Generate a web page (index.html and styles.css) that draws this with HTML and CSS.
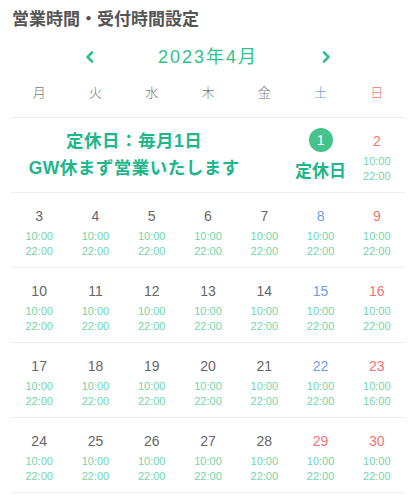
FILE: index.html
```html
<!DOCTYPE html>
<html lang="ja">
<head>
<meta charset="utf-8">
<link rel="stylesheet" href="styles.css">
</head>
<body>
<h1 class="title">営業時間・受付時間設定</h1>
<div class="nav">
  <svg class="arrow" width="16" height="14" viewBox="0 0 16 14"><polyline points="10,2.5 5.5,7 10,11.5" fill="none" stroke="#2fc38a" stroke-width="2.6" stroke-linecap="round" stroke-linejoin="round"/></svg>
  <div class="month">2023年4月</div>
  <svg class="arrow" width="16" height="14" viewBox="0 0 16 14"><polyline points="6,2.5 10.5,7 6,11.5" fill="none" stroke="#2fc38a" stroke-width="2.6" stroke-linecap="round" stroke-linejoin="round"/></svg>
</div>
<div class="calendar">
  <div class="weekdays">
    <span>月</span><span>火</span><span>水</span><span>木</span><span>金</span><span class="sat">土</span><span class="sun">日</span>
  </div>
  <div class="week">
    <div class="notice">定休日：毎月1日<br>GW休まず営業いたします</div>
    <div class="cell closed"><span class="circle">1</span><span class="closed-label">定休日</span></div>
    <div class="cell"><span class="num sun">2</span><span class="time">10:00</span><span class="time">22:00</span></div>
  </div>
  <div class="week">
    <div class="cell"><span class="num">3</span><span class="time">10:00</span><span class="time">22:00</span></div>
    <div class="cell"><span class="num">4</span><span class="time">10:00</span><span class="time">22:00</span></div>
    <div class="cell"><span class="num">5</span><span class="time">10:00</span><span class="time">22:00</span></div>
    <div class="cell"><span class="num">6</span><span class="time">10:00</span><span class="time">22:00</span></div>
    <div class="cell"><span class="num">7</span><span class="time">10:00</span><span class="time">22:00</span></div>
    <div class="cell"><span class="num sat">8</span><span class="time">10:00</span><span class="time">22:00</span></div>
    <div class="cell"><span class="num sun">9</span><span class="time">10:00</span><span class="time">22:00</span></div>
  </div>
  <div class="week">
    <div class="cell"><span class="num">10</span><span class="time">10:00</span><span class="time">22:00</span></div>
    <div class="cell"><span class="num">11</span><span class="time">10:00</span><span class="time">22:00</span></div>
    <div class="cell"><span class="num">12</span><span class="time">10:00</span><span class="time">22:00</span></div>
    <div class="cell"><span class="num">13</span><span class="time">10:00</span><span class="time">22:00</span></div>
    <div class="cell"><span class="num">14</span><span class="time">10:00</span><span class="time">22:00</span></div>
    <div class="cell"><span class="num sat">15</span><span class="time">10:00</span><span class="time">22:00</span></div>
    <div class="cell"><span class="num sun">16</span><span class="time">10:00</span><span class="time">22:00</span></div>
  </div>
  <div class="week">
    <div class="cell"><span class="num">17</span><span class="time">10:00</span><span class="time">22:00</span></div>
    <div class="cell"><span class="num">18</span><span class="time">10:00</span><span class="time">22:00</span></div>
    <div class="cell"><span class="num">19</span><span class="time">10:00</span><span class="time">22:00</span></div>
    <div class="cell"><span class="num">20</span><span class="time">10:00</span><span class="time">22:00</span></div>
    <div class="cell"><span class="num">21</span><span class="time">10:00</span><span class="time">22:00</span></div>
    <div class="cell"><span class="num sat">22</span><span class="time">10:00</span><span class="time">22:00</span></div>
    <div class="cell"><span class="num sun">23</span><span class="time">10:00</span><span class="time">16:00</span></div>
  </div>
  <div class="week">
    <div class="cell"><span class="num">24</span><span class="time">10:00</span><span class="time">22:00</span></div>
    <div class="cell"><span class="num">25</span><span class="time">10:00</span><span class="time">22:00</span></div>
    <div class="cell"><span class="num">26</span><span class="time">10:00</span><span class="time">22:00</span></div>
    <div class="cell"><span class="num">27</span><span class="time">10:00</span><span class="time">22:00</span></div>
    <div class="cell"><span class="num">28</span><span class="time">10:00</span><span class="time">22:00</span></div>
    <div class="cell"><span class="num sun">29</span><span class="time">10:00</span><span class="time">22:00</span></div>
    <div class="cell"><span class="num sun">30</span><span class="time">10:00</span><span class="time">22:00</span></div>
  </div>
</div>
</body>
</html>
```
FILE: styles.css
```css
* { box-sizing: border-box; }
body {
  margin: 0;
  background: #fff;
  font-family: "Liberation Sans", "Noto Sans CJK JP", sans-serif;
  color: #666;
}
.title {
  margin: 0;
  padding: 8px 12px 0;
  font-size: 17px;
  line-height: 24px;
  font-weight: 700;
  color: #555;
}
.nav {
  margin-top: 12px;
  height: 26px;
  display: flex;
  justify-content: center;
  align-items: center;
}
.month {
  width: 220px;
  text-align: center;
  font-size: 18px;
  line-height: 26px;
  letter-spacing: 2px;
  color: #2fc38a;
}
.calendar {
  margin: 0 11px;
}
.weekdays {
  display: grid;
  grid-template-columns: repeat(7, 1fr);
  margin-top: 13px;
  padding-bottom: 14px;
  border-bottom: 1px solid #ececec;
  font-size: 13px;
  line-height: 20px;
  text-align: center;
  color: #777;
  font-weight: 300;
}
.sat { color: #6d9cf2 !important; }
.sun { color: #f27474 !important; }
.week {
  display: grid;
  grid-template-columns: repeat(7, 1fr);
  height: 75px;
  border-bottom: 1px solid #ececec;
}
.cell {
  display: flex;
  flex-direction: column;
  align-items: center;
  padding-top: 14px;
}
.num {
  font-size: 14px;
  line-height: 18px;
  color: #666;
}
.time {
  font-size: 11px;
  line-height: 15px;
  color: #72d6aa;
}
.num + .time { margin-top: 4px; }
.notice {
  grid-column: 1 / 6;
  display: flex;
  align-items: center;
  justify-content: center;
  text-align: center;
  padding-right: 35px;
  font-size: 17.5px;
  line-height: 27px;
  font-weight: 700;
  color: #1fb68a;
  letter-spacing: 0.5px;
}
.closed { padding-top: 10px; }
.circle {
  width: 24px;
  height: 24px;
  border-radius: 50%;
  background: #45c38e;
  color: #fff;
  font-size: 14px;
  line-height: 24px;
  text-align: center;
}
.closed-label {
  margin-top: 8px;
  font-size: 17px;
  line-height: 24px;
  font-weight: 700;
  color: #1fb68a;
  white-space: nowrap;
}
```
